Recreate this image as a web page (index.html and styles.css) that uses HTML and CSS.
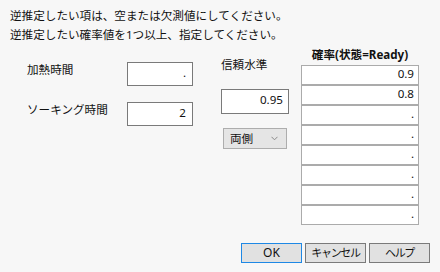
FILE: index.html
```html
<!DOCTYPE html>
<html lang="ja">
<head>
<meta charset="utf-8">
<link rel="stylesheet" href="styles.css">
</head>
<body>
<div class="dialog">
  <div class="msg">
    <div>逆推定したい項は、空または欠測値にしてください。</div>
    <div>逆推定したい確率値を1つ以上、指定してください。</div>
  </div>
  <div class="main">
    <div class="left">
      <div class="label">加熱時間</div>
      <div class="field">.</div>
      <div class="label">ソーキング時間</div>
      <div class="field">2</div>
    </div>
    <div class="mid">
      <div class="label">信頼水準</div>
      <div class="field conf">0.95</div>
      <div class="select">
        <span>両側</span>
        <svg class="chev" width="7" height="5" viewBox="0 0 7 5"><path d="M0.5 0.8 L3.5 3.8 L6.5 0.8" fill="none" stroke="#8a8a8a" stroke-width="1"/></svg>
      </div>
    </div>
    <div class="right">
      <div class="head">確率(状態=Ready)</div>
      <div class="table">
        <div class="cell">0.9</div>
        <div class="cell">0.8</div>
        <div class="cell">.</div>
        <div class="cell">.</div>
        <div class="cell">.</div>
        <div class="cell">.</div>
        <div class="cell">.</div>
        <div class="cell">.</div>
      </div>
    </div>
  </div>
  <div class="buttons">
    <div class="btn default">OK</div>
    <div class="btn kana">キャンセル</div>
    <div class="btn kana">ヘルプ</div>
  </div>
</div>
</body>
</html>
```
FILE: styles.css
```css
html, body {
  margin: 0;
  padding: 0;
  background: #f7f7f7;
}
body {
  width: 440px;
  height: 272px;
  overflow: hidden;
  font-family: "Noto Sans", "Noto Sans CJK JP", sans-serif;
  font-size: 11.6px;
  color: #111;
}
.msg {
  padding: 6px 0 0 10px;
  line-height: 19px;
  height: 38px;
}
.main {
  display: flex;
  align-items: flex-start;
  padding-left: 27px;
}
.left {
  margin-top: 18px;
  display: grid;
  grid-template-columns: 100px 66px;
  grid-auto-rows: 24px;
  row-gap: 16px;
}
.label {
  line-height: 16px;
  white-space: nowrap;
}
.field {
  box-sizing: border-box;
  height: 24px;
  background: #fff;
  border: 1px solid #7a7a7a;
  text-align: right;
  padding-right: 6px;
  line-height: 20px;
}
.mid {
  margin-left: 28px;
  margin-top: 13px;
  display: flex;
  flex-direction: column;
  align-items: flex-start;
}
.conf {
  width: 68px;
  height: 25px;
  margin-top: 16px;
  padding-right: 5px;
  line-height: 20px;
}
.select {
  box-sizing: border-box;
  width: 64px;
  height: 21px;
  margin-top: 14px;
  margin-left: 2px;
  background: #e5e5e5;
  border: 1px solid #adadad;
  display: flex;
  align-items: center;
  justify-content: space-between;
  padding: 0 8px 0 6px;
  line-height: 18px;
}
.chev {
  display: block;
}
.right {
  margin-left: 12px;
  margin-top: 3px;
  width: 118px;
}
.head {
  font-weight: bold;
  line-height: 16px;
  text-align: center;
  white-space: nowrap;
  margin-bottom: 2px;
}
.table {
  display: flex;
  flex-direction: column;
}
.cell {
  box-sizing: border-box;
  height: 20px;
  background: #fff;
  border: 1px solid #ababab;
  text-align: right;
  padding-right: 4px;
  line-height: 16px;
}
.buttons {
  display: flex;
  justify-content: flex-end;
  gap: 3px;
  padding-right: 10px;
  margin-top: 18px;
}
.btn {
  box-sizing: border-box;
  width: 61px;
  height: 20px;
  background: #e1e1e1;
  border: 1px solid #7a7a7a;
  text-align: center;
  line-height: 18px;
  font-size: 12px;
  white-space: nowrap;
  overflow: hidden;
}
.btn.kana {
  font-size: 11px;
  letter-spacing: -1.3px;
}
.btn.default {
  border-color: #1e88e5;
}
```
